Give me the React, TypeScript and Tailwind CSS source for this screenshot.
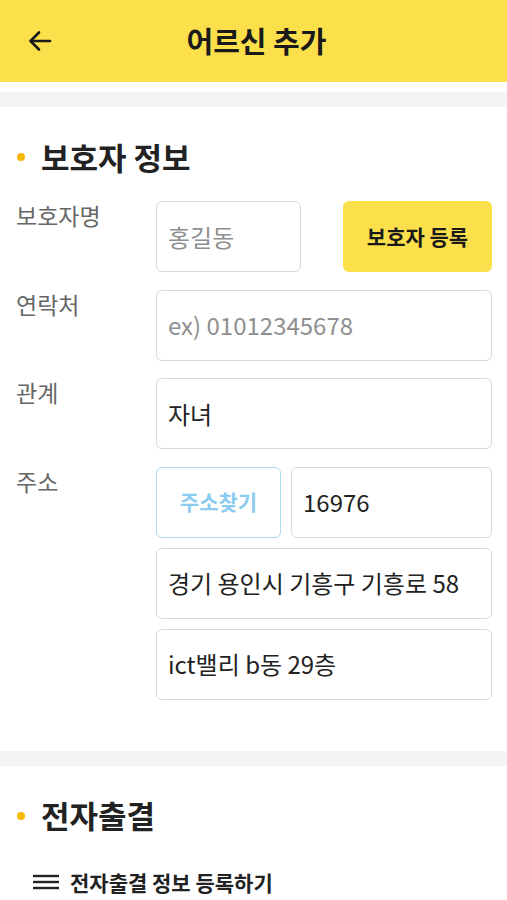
import React from 'react';

const font = { fontFamily: '"Noto Sans CJK KR", "Noto Sans", sans-serif' };

function Field({ value, placeholder, className = '' }: { value?: string; placeholder?: string; className?: string }) {
  return (
    <div className={`h-[71px] rounded-[6px] border border-[#d9d9d9] bg-white flex items-center px-[11px] text-[24px] ${className}`}>
      {value ? <span className="text-[#222]">{value}</span> : <span className="text-[#8f8f8f]">{placeholder}</span>}
    </div>
  );
}

function Row({ label, children }: { label: string; children: React.ReactNode }) {
  return (
    <div className="flex">
      <div className="w-[140px] shrink-0 text-[23px] leading-[28px] text-[#666]">{label}</div>
      <div className="flex-1 flex flex-col gap-[10px]">{children}</div>
    </div>
  );
}

function SectionTitle({ title }: { title: string }) {
  return (
    <div className="flex items-center h-[40px]">
      <span className="w-[8px] h-[8px] rounded-full bg-[#f7b800] ml-[17px] mr-[16px]" />
      <span className="text-[31px] font-bold text-[#222]">{title}</span>
    </div>
  );
}

export default function App() {
  return (
    <div className="w-[507px] min-h-[900px] bg-white" style={font}>
      {/* Header */}
      <div className="h-[82px] bg-[#fce04b] flex items-center relative">
        <svg className="absolute left-[28px] top-[30px]" width="24" height="22" viewBox="0 0 24 22" fill="none" stroke="#1a1a1a" strokeWidth="2.6" strokeLinecap="round" strokeLinejoin="round">
          <path d="M22 11H3" />
          <path d="M11 2.5L2.5 11L11 19.5" />
        </svg>
        <div className="flex-1 text-center text-[29px] font-bold text-[#1a1a1a] pl-[6px]">어르신 추가</div>
      </div>
      <div className="h-[10px] bg-white" />
      <div className="h-[15px] bg-[#f4f4f4]" />

      {/* 보호자 정보 */}
      <div className="pt-[30px] pb-[51px]">
        <SectionTitle title="보호자 정보" />
        <div className="mt-[24px] pl-[16px] pr-[15px] flex flex-col gap-[17.5px]">
          <Row label="보호자명">
            <div className="flex gap-[42px]">
              <Field placeholder="홍길동" className="w-[145px]" />
              <button className="flex-1 h-[71px] rounded-[6px] bg-[#fce04b] text-[21px] font-bold text-[#1a1a1a]">보호자 등록</button>
            </div>
          </Row>
          <Row label="연락처">
            <Field placeholder="ex) 01012345678" />
          </Row>
          <Row label="관계">
            <Field value="자녀" />
          </Row>
          <Row label="주소">
            <div className="flex gap-[10px]">
              <button className="w-[125px] h-[71px] rounded-[6px] border border-[#a8d8f4] bg-white text-[21px] font-bold text-[#8ccbf0]">주소찾기</button>
              <Field value="16976" className="flex-1" />
            </div>
            <Field value="경기 용인시 기흥구 기흥로 58" />
            <Field value="ict밸리 b동 29층" />
          </Row>
        </div>
      </div>

      <div className="h-[15px] bg-[#f4f4f4]" />

      {/* 전자출결 */}
      <div className="pt-[30px] pb-[20px]">
        <SectionTitle title="전자출결" />
        <div className="mt-[31px] flex items-center pl-[33px]">
          <svg width="26" height="16" viewBox="0 0 26 16" fill="none" stroke="#222" strokeWidth="2.4">
            <path d="M0 2H26" />
            <path d="M0 8H26" />
            <path d="M0 14H26" />
          </svg>
          <span className="ml-[11px] text-[21px] leading-[30px] font-bold text-[#222]">전자출결 정보 등록하기</span>
        </div>
      </div>
    </div>
  );
}
